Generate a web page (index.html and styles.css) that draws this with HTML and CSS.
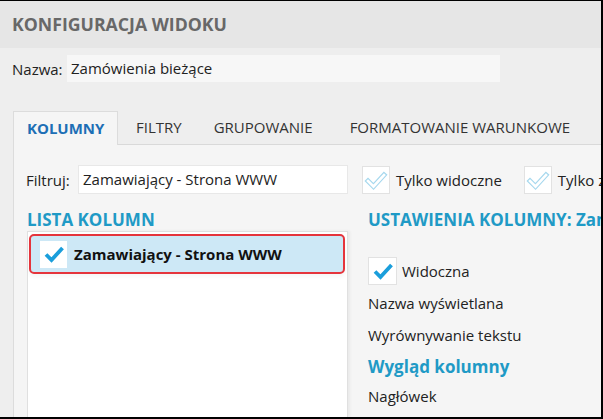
FILE: index.html
```html
<!DOCTYPE html>
<html lang="pl">

<head>
    <meta charset="UTF-8">
    <meta name="viewport" content="width=device-width, initial-scale=1.0">
    <title>Konfiguracja widoku</title>
    <link rel="stylesheet" href="styles.css">
</head>

<body>
    <div class="okno">
        <div class="naglowek">KONFIGURACJA WIDOKU</div>

        <div class="nazwa">
            <span class="etykieta">Nazwa:</span>
            <div class="pole pole-nazwa">Zamówienia bieżące</div>
        </div>

        <ul class="zakladki">
            <li class="active">KOLUMNY</li>
            <li>FILTRY</li>
            <li>GRUPOWANIE</li>
            <li class="ostatnia">FORMATOWANIE WARUNKOWE</li>
        </ul>

        <div class="panel">
            <div class="filtr">
                <span class="etykieta-filtr">Filtruj:</span>
                <div class="pole pole-filtr">Zamawiający - Strona WWW</div>
                <div class="opcja">
                    <span class="box">
                        <svg width="26" height="26" viewBox="0 0 26 26">
                            <path d="M5 14 L10.5 19.5 L21 8" fill="none" stroke="#a6d8ee" stroke-width="5" stroke-linejoin="miter" stroke-linecap="square"/>
                            <path d="M5 14 L10.5 19.5 L21 8" fill="none" stroke="#fff" stroke-width="2.6" stroke-linejoin="miter" stroke-linecap="square"/>
                        </svg>
                    </span>
                    <span>Tylko widoczne</span>
                </div>
                <div class="opcja">
                    <span class="box">
                        <svg width="26" height="26" viewBox="0 0 26 26">
                            <path d="M5 14 L10.5 19.5 L21 8" fill="none" stroke="#a6d8ee" stroke-width="5" stroke-linejoin="miter" stroke-linecap="square"/>
                            <path d="M5 14 L10.5 19.5 L21 8" fill="none" stroke="#fff" stroke-width="2.6" stroke-linejoin="miter" stroke-linecap="square"/>
                        </svg>
                    </span>
                    <span>Tylko zaznaczone</span>
                </div>
            </div>

            <div class="kolumny">
                <div class="lista-kol">
                    <h2 class="tytul">LISTA KOLUMN</h2>
                    <ul class="lista">
                        <li class="wybrana">
                            <span class="box">
                                <svg width="26" height="26" viewBox="0 0 26 26">
                                    <path d="M5 13.5 L10.5 19 L21.5 7" fill="none" stroke="#1a9edb" stroke-width="3.8"/>
                                </svg>
                            </span>
                            <span>Zamawiający - Strona WWW</span>
                        </li>
                    </ul>
                </div>

                <div class="ustawienia">
                    <h2 class="tytul">USTAWIENIA KOLUMNY: Zamawiający - Strona WWW</h2>
                    <div class="widoczna">
                        <span class="box">
                            <svg width="26" height="26" viewBox="0 0 26 26">
                                <path d="M5 13.5 L10.5 19 L21.5 7" fill="none" stroke="#1a9edb" stroke-width="3.8"/>
                            </svg>
                        </span>
                        <span>Widoczna</span>
                    </div>
                    <p class="wiersz w1">Nazwa wyświetlana</p>
                    <p class="wiersz w2">Wyrównywanie tekstu</p>
                    <h3 class="podtytul">Wygląd kolumny</h3>
                    <p class="wiersz w3">Nagłówek</p>
                </div>
            </div>
        </div>
    </div>
</body>

</html>
```

FILE: styles.css
```css
* {
    margin: 0;
    padding: 0;
    box-sizing: border-box;
}

ul li {
    list-style: none;
}

body {
    font-family: "Open Sans", "Noto Sans", sans-serif;
    font-size: 15px;
    color: #222;
    background-color: #000;
}

.okno {
    display: flex;
    flex-direction: column;
    width: 603px;
    height: 419px;
    border-top: 1px solid #000;
    border-right: 2px solid #000;
    border-bottom: 2px solid #000;
    background-color: #eee;
    overflow: hidden;
}

.naglowek {
    flex: none;
    height: 47px;
    padding-left: 12px;
    line-height: 47px;
    font-size: 17.7px;
    font-weight: bold;
    color: #686868;
    background-color: #e6e6e6;
}

.nazwa {
    display: flex;
    align-items: center;
    padding: 7px 0 0 12px;
}

.etykieta {
    flex: none;
    width: 55px;
}

.pole {
    flex: none;
    height: 27px;
    padding-left: 4px;
    line-height: 27px;
    white-space: nowrap;
}

.pole-nazwa {
    width: 433px;
    background-color: #f7f7f7;
}

/* zakladki */
.zakladki {
    display: flex;
    height: 34px;
    margin: 29px 0 0 13px;
    border-bottom: 1px solid #d9d9d9;
}

.zakladki li {
    flex: none;
    height: 33px;
    padding: 0 14px 0 18px;
    line-height: 33px;
    color: #333;
    white-space: nowrap;
}

.zakladki li.active {
    position: relative;
    width: 105px;
    height: 34px;
    padding: 0 0 0 13px;
    border: 1px solid #dcdcdc;
    border-bottom: none;
    font-weight: bold;
    color: #1d6fb5;
    background-color: #f5f5f5;
}

.zakladki .ostatnia {
    margin-left: 5px;
}

.panel {
    flex: 1;
    display: flex;
    flex-direction: column;
    margin-left: 13px;
    border-left: 1px solid #dcdcdc;
    background-color: #f5f5f5;
    min-height: 0;
}

.filtr {
    display: flex;
    align-items: center;
    padding: 20px 0 0 12px;
    white-space: nowrap;
}

.etykieta-filtr {
    flex: none;
    width: 52px;
}

.pole-filtr {
    width: 270px;
    height: 29px;
    line-height: 27px;
    border: 1px solid #e8e8e8;
    background-color: #fff;
}

.opcja {
    flex: none;
    display: flex;
    align-items: center;
    margin-left: 14px;
}

.opcja + .opcja {
    margin-left: 22px;
}

.box {
    flex: none;
    display: flex;
    align-items: center;
    justify-content: center;
    width: 28px;
    height: 28px;
    margin-right: 6px;
    border: 1px solid #e2e2e2;
    background-color: #fff;
}

.kolumny {
    flex: 1;
    display: flex;
    min-height: 0;
    padding: 15px 0 0 13px;
}

.tytul {
    height: 22px;
    line-height: 22px;
    font-size: 17px;
    font-weight: bold;
    color: #1f9ac6;
    white-space: nowrap;
}

.lista-kol {
    display: flex;
    flex-direction: column;
    flex: none;
    width: 321px;
}

.lista {
    flex: 1;
    padding: 2px 2px 0 1px;
    border: 1px solid #e0e0e0;
    border-bottom: none;
    background-color: #fff;
    box-shadow: 2px 0 3px rgba(0, 0, 0, .05);
}

.lista .wybrana {
    display: flex;
    align-items: center;
    height: 40px;
    padding-left: 9px;
    border: 2px solid #e5343c;
    border-radius: 5px;
    font-weight: bold;
    color: #111;
    white-space: nowrap;
    background-color: #cde8f6;
    box-shadow: 0 3px 4px rgba(0, 0, 0, .04);
}

.lista .wybrana .box {
    width: 27px;
    height: 27px;
    margin-right: 7px;
    border: none;
}

.ustawienia {
    flex: 1;
    min-width: 0;
    margin-left: 20px;
}

.widoczna {
    display: flex;
    align-items: center;
    margin-top: 26px;
}

.widoczna .box {
    width: 29px;
    height: 28px;
    margin-right: 5px;
}

.wiersz {
    line-height: 20px;
    white-space: nowrap;
}

.w1 {
    margin-top: 8px;
}

.w2 {
    margin-top: 12px;
}

.podtytul {
    margin-top: 11px;
    line-height: 22px;
    font-size: 17px;
    font-weight: bold;
    color: #1f9ac6;
}

.w3 {
    margin-top: 8px;
}
```
